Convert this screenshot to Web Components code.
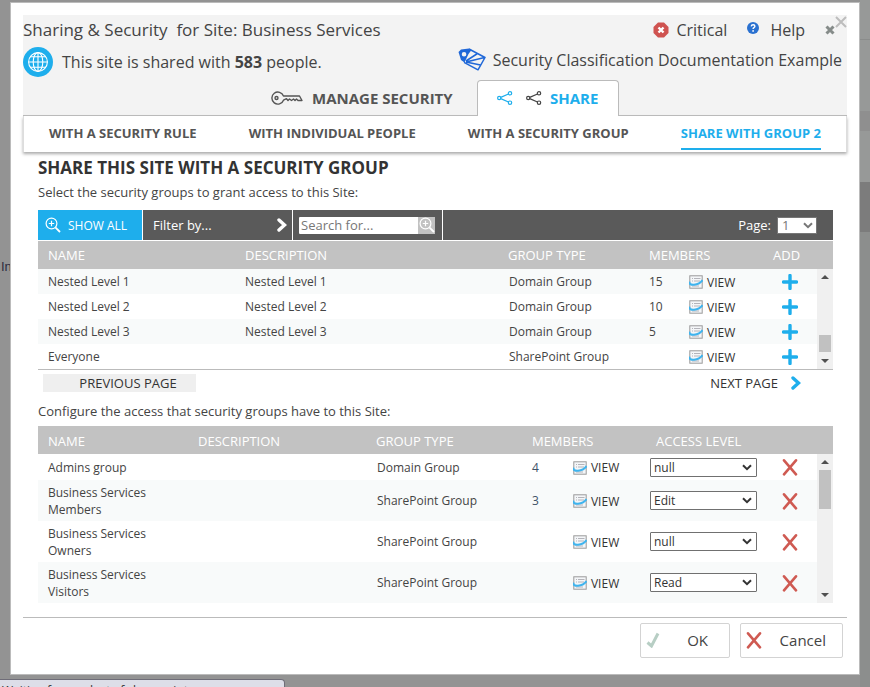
<!DOCTYPE html>
<html lang="en">
<head>
<meta charset="utf-8">
<title>Sharing &amp; Security</title>
<style>
html{height:100%}
body{margin:0;height:100%;overflow:hidden;background:#939393;font-family:"Open Sans","Liberation Sans",sans-serif;font-size:13px;color:#444}
</style>
</head>
<body>
<app-page></app-page>
<script>
const define=(name,html,setup)=>{
  const t=document.createElement('template');
  t.innerHTML='<style>*{box-sizing:border-box}button,input,select{font:inherit;color:inherit;margin:0}button{border:0;background:none;padding:0;cursor:pointer}a{color:inherit;text-decoration:none}svg{display:block;flex:none}</style>'+html;
  customElements.define(name,class extends HTMLElement{
    constructor(){super();this.attachShadow({mode:'open'}).append(t.content.cloneNode(true));if(setup)setup(this,this.shadowRoot);}
  });
};

const ICONS={
  globe:['0 0 30 30','<circle cx="15" cy="15" r="15" fill="#1eaeec"/><g fill="none" stroke="#fff" stroke-width="1.1"><circle cx="15" cy="15" r="9.4"/><ellipse cx="15" cy="15" rx="4.8" ry="9.4"/><path d="M15 5.6v18.8M5.6 15h18.8M7.4 9.8h15.2M7.4 20.2h15.2"/></g>'],
  critical:['0 0 16 16','<path d="M5 .5h6L15.5 5v6L11 15.5H5L.5 11V5z" fill="#cf5350"/><path d="M5.500 5.500l5 5M10.500 5.500l-5 5" stroke="#fff" stroke-width="2.400"/>'],
  help:['0 0 12 12','<circle cx="6" cy="6" r="6" fill="#2a71d0"/><path d="M4.200 4.400q.2-1.600 1.900-1.600 1.800 0 1.800 1.500 0 .8-.9 1.300-.9.5-.9 1.300" fill="none" stroke="#fff" stroke-width="1.400"/><circle cx="6.100" cy="8.900" r=".9" fill="#fff"/>'],
  small:['0 0 10 10','<path d="M1.500 1.500l7 7M8.500 1.500l-7 7" stroke="#858b89" stroke-width="3"/>'],
  close:['0 0 12 12','<path d="M1 1l10 10M11 1L1 11" stroke="#bdbdbd" stroke-width="2"/>'],
  tags:['0 0 28 23','<path fill="#2068d8" fill-rule="evenodd" d="M.5 4L3 1.500 11 .5l2.500 1.500-3 4L6.500 14.500 3 12z M6 4a2.300 2.300 0 1 0 .1 4.600a2.300 2.300 0 0 0-.1-4.600z"/><path fill="none" stroke="#2068d8" stroke-width="1.500" stroke-linejoin="round" d="M11 1l16 8.500L20 21.800 6 14.300M8 13L19.500 5.500M8 14L26.500 9.500M8 14L22.500 17"/>'],
  key:['0 0 32 14','<g fill="none" stroke="#555" stroke-width="1.400" stroke-linejoin="round"><path d="M12.500 5h16L31 9.500h-4l-1.500-1.500-1.500 1.500-1.500-1.500-2 1.500-2-1.500-1.500 1.500-1.500-1.800-3 1.500a6 6 0 1 1 0-4.200z"/><circle cx="5.500" cy="7" r="1.500"/></g>'],
  share:['0 0 16 14','<g fill="none" stroke="currentColor" stroke-width="1.200"><circle cx="2.200" cy="7" r="1.600"/><circle cx="13" cy="2.300" r="1.700"/><circle cx="13" cy="11.700" r="1.700"/><path d="M3.700 6.400l7.800-3.400M3.700 7.600l7.800 3.400"/></g>'],
  zoom:['0 0 16 16','<g fill="none" stroke="#fff" stroke-width="1.200"><circle cx="6.500" cy="6.500" r="5.400"/><path d="M6.500 3.800v5.400M3.800 6.500h5.400"/><path d="M10.600 10.600l4.400 4.400" stroke-width="1.800"/></g>'],
  chevron:['0 0 10 14','<path d="M2 2l5.500 5L2 12" fill="none" stroke="currentColor" stroke-width="3.400" stroke-linecap="round"/>'],
  view:['0 0 14 14','<rect x=".8" y=".8" width="12.400" height="12.400" fill="#f4f6f8" stroke="#9a9a9a"/><path d="M3 3.500h1M5 3.500h6.500M3 6h1M5 6h6M3 11h7" stroke="#b4b4ba"/><path d="M.5 6.500Q0 10.200 5 9.800 10.500 9.300 13.500 5.200" fill="none" stroke="#3fb4ee" stroke-width="2"/>'],
  plus:['0 0 16 16','<path d="M8 1.500v13M1.500 8h13" stroke="#1eaeec" stroke-width="3.400" stroke-linecap="round"/>'],
  cross:['0 0 16 18','<path d="M2 2.300l12 14M14 2.300L2 16.300" stroke="#cf5a52" stroke-width="2.600" stroke-linecap="round"/>'],
  tick:['0 0 14 16','<path d="M1.500 10.500l4 3.500L12 1.500" fill="none" stroke="#b7cec4" stroke-width="3"/>']
};
customElements.define('app-icon',class extends HTMLElement{
  constructor(){super();this.attachShadow({mode:'open'});}
  connectedCallback(){
    const [box,body]=ICONS[this.getAttribute('name')],[, ,w,h]=box.split(' ');
    this.shadowRoot.innerHTML=`<style>:host{display:inline-flex;flex:none}svg{display:block}</style><svg aria-hidden="true" width="${w}" height="${h}" viewBox="${box}">${body}</svg>`;
  }
});

define('app-backdrop',`<style>
:host{display:flex;position:absolute;inset:0;justify-content:space-between;background:#939393;overflow:hidden}
.left{padding-top:259px;font:13px "Liberation Sans",sans-serif;color:#2b2b3f;white-space:nowrap}
.left span{padding-left:1px}
.right{width:10px;background:#8c8e8d}
.right i{display:block;background:#979998}
.right i:nth-child(1){height:40px;border-bottom:1px solid #8a8c8b}
.right i:nth-child(2){height:71px}
.right i:nth-child(3){height:20px;background:#8f8f8f}
.right i:nth-child(4){height:51px}
.right i:nth-child(5){height:50px;background:#7c7c7c}
</style><div class="left"><span>In</span></div><div class="right"><i></i><i></i><i></i><i></i><i></i></div>`);

define('status-bubble',`<style>
:host{display:block;position:absolute;left:0;top:100%;margin-top:-8px;width:285px;height:24px;border:1px solid #6f6d78;border-left:0;border-radius:0 4px 0 0;background:#dddee8;font-size:12px;line-height:16px;padding:3px 0 0 2px;color:#333;white-space:nowrap;overflow:hidden}
</style><slot></slot>`);

define('dialog-header',`<style>
:host{display:block;background:#f3f3f3;font-size:16px;line-height:24px;color:#444}
.row{display:flex;justify-content:space-between;align-items:center;height:30px}
.row>div,.row a,.pair{display:flex;align-items:center}
.title{font-size:17px;white-space:pre}
.tools{gap:20px}.tools a{gap:7px}.tools .help{gap:11px}.tools .help app-icon{padding-bottom:4px}.tools button{display:flex}
.close{margin-top:-16px}
.shared{gap:9px;padding-bottom:2px}.row.two{height:35px}.doc{gap:7px;padding:0 5px 6px 0}
b{font-weight:700}
nav{display:flex;height:36px;border-bottom:1px solid #bbb;padding-left:calc(50% - 164px);font-size:15px;font-weight:700;color:#555}
nav a{display:flex;align-items:center;gap:9px;height:36px}
nav a:first-child{width:206px}
nav .on{color:#1eaeec;background:#fff;border:1px solid #bbb;border-bottom:0;border-radius:4px 4px 0 0;padding:0 20px 2px 19px;gap:8px}
.on .dark{color:#444;margin-left:5px}
</style>
<div class="row"><span class="title">Sharing &amp; Security  for Site: Business Services</span>
<div class="tools"><a href="#"><app-icon name="critical"></app-icon>Critical</a><a class="help" href="#"><app-icon name="help"></app-icon>Help</a><div class="pair"><button aria-label="Hide"><app-icon name="small"></app-icon></button><button class="close" aria-label="Close"><app-icon name="close"></app-icon></button></div></div></div>
<div class="row two"><div class="shared"><app-icon name="globe"></app-icon><span>This site is shared with <b>583</b> people.</span></div>
<a class="doc" href="#"><app-icon name="tags"></app-icon>Security Classification Documentation Example</a></div>
<nav><a href="#"><app-icon name="key"></app-icon>MANAGE SECURITY</a><a class="on" href="#"><app-icon name="share"></app-icon><app-icon class="dark" name="share"></app-icon>SHARE</a></nav>`);

define('sub-tabs',`<style>
:host{display:flex;justify-content:space-between;box-sizing:border-box;height:36px;padding:0 25px;border:solid #ddd;border-width:0 1px;background:#fff;box-shadow:0 2px 3px #aaa;font-size:13px;font-weight:700;color:#555}
a{display:flex;align-items:center;height:34px;padding-top:2px;border-bottom:2px solid transparent}
a:last-child{color:#1eaeec;border-color:#1eaeec}
</style><a href="#">WITH A SECURITY RULE</a><a href="#">WITH INDIVIDUAL PEOPLE</a><a href="#">WITH A SECURITY GROUP</a><a href="#">SHARE WITH GROUP 2</a>`);

define('group-toolbar',`<style>
:host{display:flex;height:30px;gap:1px;color:#fff;font-size:13px}
button,.search,.page{background:#5a5a5a;display:flex;align-items:center}
.all{background:#1eaeec;width:104px;gap:7px;padding-left:7px;font-size:12px}
.filter{width:149px;justify-content:space-between;padding:0 5px 0 10px}
.search{width:149px;padding-left:6px}
.search input{width:119px;height:17px;border:0;border-radius:1px 0 0 1px;padding:0 2px;background:#fff;color:#555}
.search input::placeholder{color:#777;opacity:1}
.search button{width:17px;height:17px;background:#c2c2c2;justify-content:center}
.page{flex:1;justify-content:flex-end;padding-right:16px;gap:6px}
.sel{display:grid;align-items:center;color:#777}
.sel>*{grid-area:1/1}.sel svg{justify-self:end;margin-right:4px;pointer-events:none}
select{appearance:none;width:40px;height:17px;border:1px solid #777;border-radius:0;background:#fff;padding:0 4px;line-height:15px}
</style><button class="all"><app-icon name="zoom"></app-icon>SHOW ALL</button><button class="filter">Filter by...<app-icon name="chevron"></app-icon></button><div class="search"><input aria-label="Search for" placeholder="Search for..."><button aria-label="Search"><app-icon name="zoom"></app-icon></button></div><div class="page"><label for="p">Page:</label><span class="sel"><select id="p"><option>1</option></select><svg width="10" height="7" viewBox="0 0 10 7"><path d="M1 1.200l4 4 4-4" fill="none" stroke="#777" stroke-width="2"/></svg></span></div>`);

define('scroll-track',`<style>
:host{display:flex;flex-direction:column;align-items:center;width:16px;background:#f0f0f0;padding:6px 0;box-sizing:border-box}
i{display:block;width:12px;background:#c1c1c1}
span{flex:1}
</style><svg width="8" height="4"><path d="M0 4l4-4 4 4z" fill="#505050"/></svg><span class="a"></span><i></i><span class="b"></span><svg width="8" height="4"><path d="M0 0l4 4 4-4z" fill="#505050"/></svg>`,(el,root)=>{
  queueMicrotask(()=>{const [a,h,b]=el.getAttribute('parts').split(' ');
  root.querySelector('.a').style.flexGrow=a;root.querySelector('.b').style.flexGrow=b;root.querySelector('i').style.height=h+'px';});
});

const TABLE=`:host{display:grid;grid-template-columns:1fr 16px}
table{grid-area:1/1/2/3;width:100%;table-layout:fixed;border-collapse:collapse;font-size:12px;line-height:17px;color:#444}
scroll-track{grid-area:1/2;margin-top:28px}
th{height:28px;background:#c2c2c2;color:#fff;font-size:13px;font-weight:400;text-align:left;padding:0 0 0 10px}
td{padding:0 0 0 10px}
td:first-child{padding-right:24px}
td:nth-child(3){padding-left:11px}
.c{text-align:center;padding:0}
td button{display:inline-flex;align-items:center;gap:4px;color:#333;vertical-align:middle}
`;
const VIEW='<button><app-icon name="view"></app-icon>VIEW</button>';

define('grant-table',`<style>${TABLE}
:host{border-bottom:1px solid #bbb}
tbody tr{height:25px}tbody tr:nth-child(odd){background:#f8fafa}
</style><table><colgroup><col style="width:197px"><col><col style="width:141px"><col style="width:40px"><col style="width:84px"><col style="width:54px"><col style="width:16px"></colgroup>
<thead><tr><th>NAME</th><th>DESCRIPTION</th><th>GROUP TYPE</th><th colspan="2">MEMBERS</th><th colspan="2">ADD</th></tr></thead><tbody>${
[['Nested Level 1','Nested Level 1','Domain Group',15],['Nested Level 2','Nested Level 2','Domain Group',10],['Nested Level 3','Nested Level 3','Domain Group',5],['Everyone','','SharePoint Group','']]
.map(r=>`<tr>${r.map(c=>`<td>${c}</td>`).join('')}<td>${VIEW}</td><td class="c"><button aria-label="Add ${r[0]}"><app-icon name="plus"></app-icon></button></td><td></td></tr>`).join('')
}</tbody></table><scroll-track parts="55 17 7"></scroll-track>`);

define('access-table',`<style>${TABLE}
th{padding-top:2px}
tbody tr{height:41px}tbody tr:first-child{height:26px}tbody tr:nth-child(even){background:#f8fafa}
td:nth-child(4){color:#3f5368}
.sel{display:grid;align-items:center;width:107px}
.sel>*{grid-area:1/1}.sel svg{justify-self:end;margin-right:5px;pointer-events:none}
select{appearance:none;width:100%;height:19px;border:1px solid #707070;border-radius:1px;background:#fff;padding:0 3px;color:#333;line-height:17px}
</style><table><colgroup><col style="width:150px"><col><col style="width:156px"><col style="width:41px"><col style="width:77px"><col style="width:123px"><col style="width:54px"><col style="width:16px"></colgroup>
<thead><tr><th>NAME</th><th>DESCRIPTION</th><th>GROUP TYPE</th><th colspan="2">MEMBERS</th><th colspan="3" style="padding-left:16px">ACCESS LEVEL</th></tr></thead><tbody>${
[['Admins group','','Domain Group',4,'null'],['Business Services Members','','SharePoint Group',3,'Edit'],['Business Services Owners','','SharePoint Group','','null'],['Business Services Visitors','','SharePoint Group','','Read']]
.map(r=>`<tr>${r.slice(0,4).map(c=>`<td>${c}</td>`).join('')}<td>${VIEW}</td><td><span class="sel"><select aria-label="Access level for ${r[0]}"><option>${r[4]}</option></select><svg width="10" height="7" viewBox="0 0 10 7"><path d="M1 1.200l4 4 4-4" fill="none" stroke="#333" stroke-width="2"/></svg></span></td><td class="c"><button aria-label="Remove ${r[0]}"><app-icon name="cross"></app-icon></button></td><td></td></tr>`).join('')
}</tbody></table><scroll-track parts="6 39 82"></scroll-track>`);

define('page-links',`<style>
:host{display:flex;justify-content:space-between;align-items:center;box-sizing:border-box;height:28px;padding:0 32px 2px 5px;font-size:13px;line-height:18px;color:#333}
.prev{background:#efefef;width:153px;height:18px;padding-left:17px}
.next{display:flex;align-items:center;gap:13px}.next app-icon{color:#1eaeec}
</style><button class="prev">PREVIOUS PAGE</button><button class="next">NEXT PAGE<app-icon name="chevron"></app-icon></button>`);

define('dialog-footer',`<style>
:host{display:flex;justify-content:flex-end;gap:10px;border-top:1px solid #bbb;padding:5px 4px 0 0;font-size:15px}
button{display:flex;align-items:center;justify-content:space-between;height:35px;border:1px solid #d3d3d3;border-radius:2px;background:#fff;padding:0 16px 2px 5px;color:#444}
.ok{width:90px;padding-right:21px}
.no{width:103px}
</style><button class="ok"><app-icon name="tick"></app-icon>OK</button><button class="no"><app-icon name="cross"></app-icon>Cancel</button>`);

define('share-dialog',`<style>
:host{display:block;position:relative;margin:2px 10px 0;border:1px solid #bbb;background:#fff;padding:12px 12px 16px}
main{padding:0 14px 0 15px}
h1{margin:3px 0 0;font-size:17px;font-weight:700;line-height:26px;color:#333}
p{margin:0;font-size:13px;line-height:22px}
grant-table{margin-top:1px}
p.first{margin-bottom:7px}p.second{margin:2px 0 4px}
dialog-footer{margin-top:14px}
</style><dialog-header></dialog-header><sub-tabs></sub-tabs>
<main><h1>SHARE THIS SITE WITH A SECURITY GROUP</h1><p class="first">Select the security groups to grant access to this Site:</p>
<group-toolbar></group-toolbar><grant-table></grant-table><page-links></page-links>
<p class="second">Configure the access that security groups have to this Site:</p><access-table></access-table></main><dialog-footer></dialog-footer>`);

define('app-page',`<style>:host{display:flow-root;position:relative;height:100%}</style><app-backdrop></app-backdrop><share-dialog></share-dialog><status-bubble>Waiting for product-cf.sharepoint.com...</status-bubble>`);
</script>
</body>
</html>
